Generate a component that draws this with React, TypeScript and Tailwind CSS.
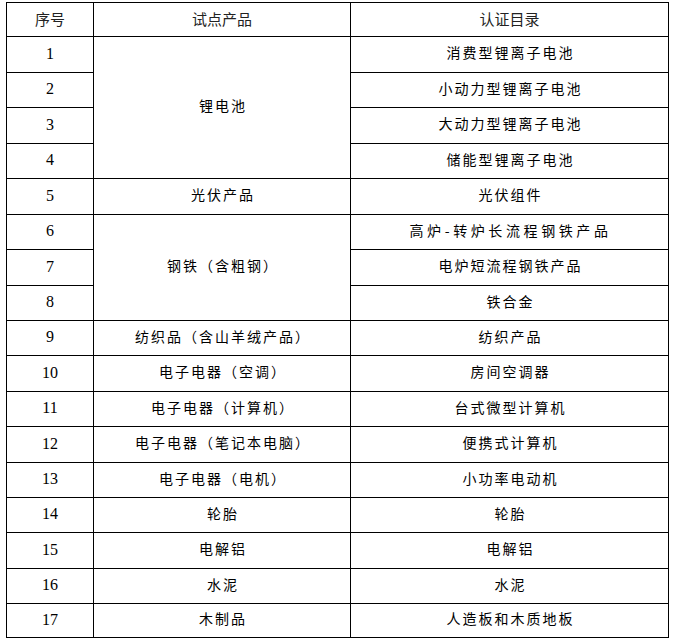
import { Fragment } from "react";

const rows: { no: number; product?: string; span?: number; catalog: string; wide?: boolean }[] = [
  { no: 1, product: "锂电池", span: 4, catalog: "消费型锂离子电池" },
  { no: 2, catalog: "小动力型锂离子电池" },
  { no: 3, catalog: "大动力型锂离子电池" },
  { no: 4, catalog: "储能型锂离子电池" },
  { no: 5, product: "光伏产品", catalog: "光伏组件" },
  { no: 6, product: "钢铁（含粗钢）", span: 3, catalog: "高炉-转炉长流程钢铁产品", wide: true },
  { no: 7, catalog: "电炉短流程钢铁产品" },
  { no: 8, catalog: "铁合金" },
  { no: 9, product: "纺织品（含山羊绒产品）", catalog: "纺织产品" },
  { no: 10, product: "电子电器（空调）", catalog: "房间空调器" },
  { no: 11, product: "电子电器（计算机）", catalog: "台式微型计算机" },
  { no: 12, product: "电子电器（笔记本电脑）", catalog: "便携式计算机" },
  { no: 13, product: "电子电器（电机）", catalog: "小功率电动机" },
  { no: 14, product: "轮胎", catalog: "轮胎" },
  { no: 15, product: "电解铝", catalog: "电解铝" },
  { no: 16, product: "水泥", catalog: "水泥" },
  { no: 17, product: "木制品", catalog: "人造板和木质地板" },
];

const cell = "flex items-center justify-center bg-white";
const head = "text-[15px] text-[#222] font-['Noto_Sans_CJK_SC',sans-serif]";
const zh = "pb-[4px] pl-[2px] text-[14px] text-black font-['Noto_Sans_CJK_SC',sans-serif]";

export default function App() {
  return (
    <div className="min-h-[641px] w-[674px] bg-white pt-[2px] pl-[6px]">
      <div className="grid w-[663px] grid-cols-[86px_256px_317px] grid-rows-[33px_35px_34px_35px_34px_35px_34px_35px_34px_34px_35px_34px_35px_34px_34px_35px_34px_33px] gap-px bg-black p-px">
        <div className={`${cell} ${head}`}>序号</div>
        <div className={`${cell} ${head}`}>试点产品</div>
        <div className={`${cell} ${head}`}>认证目录</div>
        {rows.map((r) => (
          <Fragment key={r.no}>
            <div className={`${cell} pb-[2px] text-[16px] text-black font-['Liberation_Serif',serif]`}>
              {r.no}
            </div>
            {r.product && (
              <div
                className={`${cell} ${zh} tracking-[2px] ${r.span === 4 ? "row-span-4" : r.span === 3 ? "row-span-3" : ""}`}
              >
                {r.product}
              </div>
            )}
            <div className={`${cell} ${zh} ${r.wide ? "tracking-[3.6px]" : "tracking-[2px]"}`}>{r.catalog}</div>
          </Fragment>
        ))}
      </div>
    </div>
  );
}
